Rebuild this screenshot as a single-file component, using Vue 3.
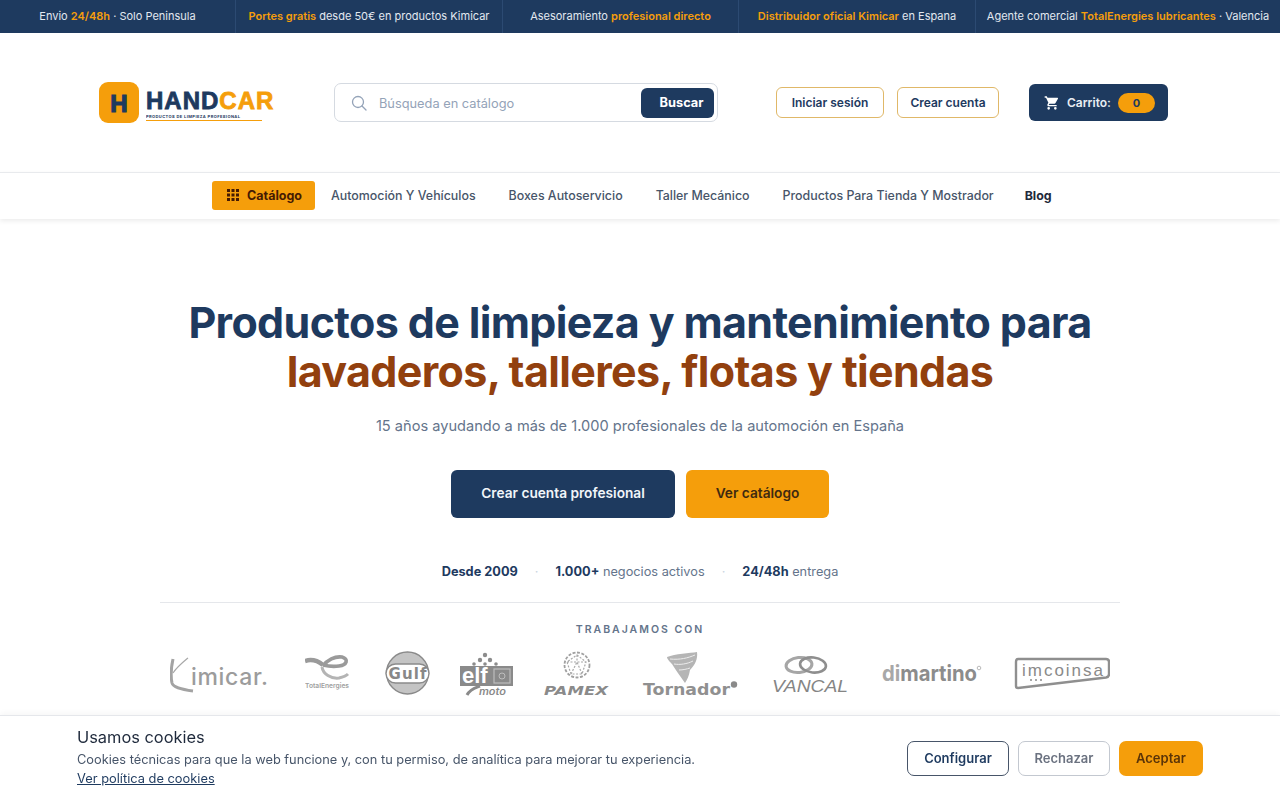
<script setup>
const topItems = [
  [{ t: 'Envio ' }, { t: '24/48h', b: 1 }, { t: ' · Solo Peninsula' }],
  [{ t: 'Portes gratis', b: 1 }, { t: ' desde 50€ en productos Kimicar' }],
  [{ t: 'Asesoramiento ' }, { t: 'profesional directo', b: 1 }],
  [{ t: 'Distribuidor oficial Kimicar', b: 1 }, { t: ' en Espana' }],
  [{ t: 'Agente comercial ' }, { t: 'TotalEnergies lubricantes', b: 1 }, { t: ' · Valencia' }],
]
const navLinks = ['Automoción Y Vehículos', 'Boxes Autoservicio', 'Taller Mecánico', 'Productos Para Tienda Y Mostrador']
</script>

<template>
  <div class="page">
    <div class="topbar">
      <div v-for="(item, i) in topItems" :key="i" class="top-item">
        <span v-for="(part, j) in item" :key="j" :class="{ hl: part.b }">{{ part.t }}</span>
      </div>
    </div>

    <header class="header">
      <div class="logo">
        <div class="logo-mark">H</div>
        <div class="logo-text">
          <div class="logo-name">HAND<span>CAR</span></div>
          <div class="logo-tag">PRODUCTOS DE LIMPIEZA PROFESIONAL</div>
        </div>
      </div>
      <div class="search">
        <svg class="search-icon" width="16" height="16" viewBox="0 0 16 16" fill="none" stroke="#94a3b8" stroke-width="1.3">
          <circle cx="7" cy="7" r="5.5" />
          <path d="M11 11l4 4" stroke-linecap="round" />
        </svg>
        <span class="search-ph">Búsqueda en catálogo</span>
        <button class="search-btn">Buscar</button>
      </div>
      <div class="auth">
        <button class="outline-btn login">Iniciar sesión</button>
        <button class="outline-btn signup">Crear cuenta</button>
      </div>
      <button class="cart">
        <svg width="16" height="16" viewBox="0 0 24 24" fill="#fff">
          <path d="M7 18a2 2 0 1 0 0 4 2 2 0 0 0 0-4zM1 2v2h2l3.6 7.59-1.35 2.45A2 2 0 0 0 7 17h12v-2H7.42a.25.25 0 0 1-.25-.25l.03-.12.9-1.63h7.45c.75 0 1.41-.41 1.75-1.03l3.58-6.49A1 1 0 0 0 20 4H5.21l-.94-2H1zm16 16a2 2 0 1 0 0 4 2 2 0 0 0 0-4z" />
        </svg>
        <span>Carrito:</span>
        <span class="cart-count">0</span>
      </button>
    </header>

    <nav class="nav">
      <button class="cat-btn">
        <svg width="12" height="12" viewBox="0 0 12 12" fill="#451a03">
          <rect x="0" y="0" width="3" height="3" /><rect x="4.5" y="0" width="3" height="3" /><rect x="9" y="0" width="3" height="3" />
          <rect x="0" y="4.5" width="3" height="3" /><rect x="4.5" y="4.5" width="3" height="3" /><rect x="9" y="4.5" width="3" height="3" />
          <rect x="0" y="9" width="3" height="3" /><rect x="4.5" y="9" width="3" height="3" /><rect x="9" y="9" width="3" height="3" />
        </svg>
        Catálogo
      </button>
      <a v-for="link in navLinks" :key="link" class="nav-link">{{ link }}</a>
      <a class="nav-link blog">Blog</a>
    </nav>

    <main class="hero">
      <h1>Productos de limpieza y mantenimiento para<br /><span>lavaderos, talleres, flotas y tiendas</span></h1>
      <p class="sub">15 años ayudando a más de 1.000 profesionales de la automoción en España</p>
      <div class="cta">
        <button class="cta-primary">Crear cuenta profesional</button>
        <button class="cta-secondary">Ver catálogo</button>
      </div>
      <div class="stats">
        <span><b>Desde 2009</b></span>
        <i>·</i>
        <span><b>1.000+</b> negocios activos</span>
        <i>·</i>
        <span><b>24/48h</b> entrega</span>
      </div>
      <section class="brands">
        <div class="brands-title">TRABAJAMOS CON</div>
        <div class="brand-row">
          <!-- kimicar -->
          <svg width="105" height="50" viewBox="0 0 105 50">
            <path d="M3 9 C1 18 1 28 2 33 C3 37 10 39 23 41" fill="none" stroke="#a3a3a3" stroke-width="3" />
            <path d="M18 8 C12 13 7 17 3 23" fill="none" stroke="#a8a8a8" stroke-width="1.2" />
            <text x="21" y="35" textLength="77" lengthAdjust="spacing" class="l-kimicar">imicar.</text>
          </svg>
          <!-- totalenergies -->
          <svg width="50" height="50" viewBox="0 0 50 50">
            <path d="M0 11 C6 9 13 11 18 15" fill="none" stroke="#9a9a9a" stroke-width="4.5" />
            <path d="M18 16 C22 10 30 6 37 7 C44 9 42 15 34 16 C28 17 22 16 18 15" fill="none" stroke="#9a9a9a" stroke-width="3.6" />
            <path d="M17 17 C18 24 26 29 34 28 C38 27 41 26 43 24" fill="none" stroke="#b4b4b4" stroke-width="3" />
            <text x="0" y="38" textLength="44" lengthAdjust="spacingAndGlyphs" class="l-total">TotalEnergies</text>
          </svg>
          <!-- gulf -->
          <svg width="45" height="50" viewBox="0 0 45 50">
            <circle cx="22.500" cy="23" r="21" fill="#c4c4c4" stroke="#8a8a8a" stroke-width="1.4" />
            <rect x="1" y="14" width="43" height="19" rx="9.500" fill="#fff" stroke="#8a8a8a" stroke-width="1.4" />
            <text x="22.500" y="29" text-anchor="middle" textLength="38" lengthAdjust="spacing" class="l-gulf">Gulf</text>
          </svg>
          <!-- elf moto -->
          <svg width="54" height="50" viewBox="0 0 54 50">
            <g fill="#8c8c8c">
              <circle cx="25" cy="5" r="2.200" /><circle cx="20" cy="10" r="2.200" /><circle cx="30" cy="10" r="2.200" />
              <circle cx="14" cy="14" r="1.800" /><circle cx="25" cy="14" r="1.800" /><circle cx="36" cy="14" r="1.800" />
            </g>
            <rect x="0" y="16" width="53" height="20" fill="#8a8a8a" />
            <rect x="34" y="19" width="16" height="14" fill="none" stroke="#bdbdbd" stroke-width="1.2" />
            <circle cx="42" cy="26" r="3" fill="none" stroke="#bdbdbd" />
            <text x="2" y="33" class="l-elf">elf</text>
            <text x="19" y="45" textLength="27" lengthAdjust="spacingAndGlyphs" class="l-moto">moto</text>
            <path d="M7 45 C10 39 15 38 20 36" stroke="#8a8a8a" stroke-width="3" fill="none" />
          </svg>
          <!-- pamex -->
          <svg width="68" height="50" viewBox="0 0 68 50">
            <circle cx="33" cy="15" r="12.500" fill="none" stroke="#a0a0a0" stroke-width="1.800" stroke-dasharray="3 1.500" />
            <path d="M33 5 L42 12 L38 24 L27 24 L23 12 Z M33 5 L33 12 M23 12 L33 12 L42 12 M27 24 L33 12 L38 24" fill="none" stroke="#a8a8a8" stroke-width="1.200" stroke-dasharray="2 1.500" />
            <text x="0" y="45" textLength="64" lengthAdjust="spacingAndGlyphs" class="l-pamex">PAMEX</text>
          </svg>
          <!-- tornador -->
          <svg width="98" height="50" viewBox="0 0 98 50">
            <path d="M25 7 C33 4 48 3 55 2 C56 9 53 15 48 20 C47 26 45 30 43 33 C39 27 33 19 30 14 C28 12 25 9 25 7 Z" fill="#b5b5b5" />
            <path d="M28 9 C38 10 46 8 53 5 M32 14 C38 15 45 14 51 11 M37 20 C41 20 45 19 48 18" stroke="#ececec" stroke-width="1" fill="none" />
            <text x="1" y="45" textLength="87" lengthAdjust="spacingAndGlyphs" class="l-tornador">Tornador</text>
            <circle cx="92" cy="34.500" r="3.200" fill="#8a8a8a" />
          </svg>
          <!-- vancal -->
          <svg width="82" height="50" viewBox="0 0 82 50">
            <ellipse cx="29" cy="15" rx="13" ry="7.500" fill="none" stroke="#a6a6a6" stroke-width="3" transform="rotate(-6 29 15)" />
            <ellipse cx="43" cy="15" rx="13" ry="7.500" fill="none" stroke="#8e8e8e" stroke-width="2.600" transform="rotate(6 43 15)" />
            <text x="2" y="42" textLength="76" lengthAdjust="spacingAndGlyphs" class="l-vancal">VANCAL</text>
          </svg>
          <!-- dimartino -->
          <svg width="102" height="50" viewBox="0 0 102 50">
            <text x="0" y="31" textLength="95" lengthAdjust="spacingAndGlyphs" class="l-dim">di<tspan class="l-dim-m">martino</tspan></text>
            <circle cx="97" cy="18" r="1.800" fill="none" stroke="#a8a8a8" stroke-width="0.800" />
          </svg>
          <!-- imcoinsa -->
          <svg width="96" height="50" viewBox="0 0 96 50">
            <path d="M4 9 Q2 9 2 12 V36 Q2 38 4 38 L92 27.500 Q95 27 95 24 V12 Q95 9 92 9 Z" fill="none" stroke="#8f8f8f" stroke-width="2.400" />
            <text x="8" y="26" textLength="81" lengthAdjust="spacing" class="l-imco">imcoinsa</text>
            <circle cx="17" cy="30" r="1" fill="#8a8a8a" /><circle cx="22" cy="30" r="1" fill="#8a8a8a" /><circle cx="27" cy="30" r="1" fill="#8a8a8a" />
          </svg>
        </div>
      </section>
    </main>

    <div class="cookies">
      <div class="cookie-text">
        <div class="cookie-title">Usamos cookies</div>
        <div class="cookie-desc">Cookies técnicas para que la web funcione y, con tu permiso, de analítica para mejorar tu experiencia.</div>
        <a class="cookie-link">Ver política de cookies</a>
      </div>
      <div class="cookie-actions">
        <button class="ck ck-config">Configurar</button>
        <button class="ck ck-reject">Rechazar</button>
        <button class="ck ck-accept">Aceptar</button>
      </div>
    </div>
  </div>
</template>

<style>
html, body { margin: 0; background: #fff; }
</style>

<style scoped>
.page {
  font-family: Inter, "Liberation Sans", sans-serif;
  color: #1e3a5f;
  height: 800px;
  overflow: hidden;
}
button { font-family: inherit; cursor: pointer; }

.topbar {
  display: grid;
  grid-template-columns: 236px 267px 236px 237px 304px;
  height: 33px;
  background: #1e3a5f;
  color: #e2e8f0;
  font-size: 11px;
}
.top-item {
  display: flex;
  align-items: center;
  justify-content: center;
  padding-bottom: 1px;
  white-space: pre;
  border-right: 1px solid #2c4a72;
}
.top-item:last-child { border-right: 0; }
.hl { color: #f59e0b; font-weight: 600; }

.header {
  display: flex;
  align-items: center;
  height: 139px;
  padding-left: 99px;
}
.logo { display: flex; align-items: center; width: 235px; }
.logo-mark {
  width: 40px;
  height: 41px;
  border-radius: 9px;
  background: #f59e0b;
  color: #1e3a5f;
  font: 700 24px/43px "Liberation Sans", sans-serif;
  text-align: center;
  -webkit-text-stroke: 1.2px #1e3a5f;
}
.logo-text { margin-left: 7px; padding-top: 4px; }
.logo-name {
  font: 700 24px/26px "Liberation Sans", sans-serif;
  letter-spacing: 1px;
  color: #1e3a5f;
  -webkit-text-stroke: 0.8px currentColor;
}
.logo-name span { color: #f59e0b; }
.logo-tag {
  font-size: 4px;
  line-height: 5px;
  font-weight: 700;
  letter-spacing: 0.42px;
  white-space: nowrap;
  width: 116px;
  overflow: hidden;
  border-bottom: 1px solid #f59e0b;
  padding-bottom: 1px;
}

.search {
  box-sizing: border-box;
  display: flex;
  align-items: center;
  width: 384px;
  height: 39px;
  border: 1px solid #d5dae1;
  border-radius: 7px;
  padding: 0 3px 0 16px;
}
.search-ph { margin-left: 12px; padding-top: 1px; flex: 1; color: #94a3b8; font-size: 12.8px; }
.search-btn {
  width: 73px;
  height: 30px;
  border: 0;
  border-radius: 6px;
  background: #1e3a5f;
  color: #fff;
  font-size: 12.8px;
  font-weight: 700;
  padding-left: 14px;
}

.auth { display: flex; gap: 13px; margin-left: 58px; }
.outline-btn {
  height: 31px;
  background: #fff;
  border: 1px solid #e0b868;
  border-radius: 6px;
  color: #1e3a5f;
  font-size: 12px;
  font-weight: 600;
  padding: 0;
}
.login { width: 108px; }
.signup { width: 102px; }

.cart {
  display: flex;
  align-items: center;
  width: 139px;
  height: 37px;
  margin-left: 30px;
  padding: 0 13px 0 15px;
  border: 0;
  border-radius: 6px;
  background: #1e3a5f;
  color: #e8edf3;
  font-size: 12px;
  font-weight: 600;
}
.cart svg { margin-right: 7px; }
.cart-count {
  margin-left: 7px;
  width: 37px;
  height: 20px;
  line-height: 20px;
  border-radius: 10px;
  background: #f59e0b;
  color: #1e3a5f;
  font-size: 11px;
  font-weight: 700;
}

.nav {
  box-sizing: border-box;
  height: 47px;
  display: flex;
  align-items: center;
  gap: 33px;
  padding: 0 0 2px 212px;
  border-top: 1px solid #e8eaed;
  box-shadow: 0 2px 5px rgba(0, 0, 0, 0.08);
  font-size: 12.4px;
  color: #475569;
  font-weight: 500;
}
.cat-btn {
  display: flex;
  align-items: center;
  gap: 8px;
  width: 103px;
  height: 29px;
  margin-right: -17px;
  padding: 0 0 0 15px;
  border: 0;
  border-radius: 3px;
  background: #f59e0b;
  color: #451a03;
  font-size: 12.5px;
  font-weight: 700;
}
.blog { color: #1e293b; font-weight: 700; margin-left: -2px; }

.hero {
  display: flex;
  flex-direction: column;
  align-items: center;
  padding-top: 79px;
}
h1 {
  margin: 0;
  font-size: 43px;
  line-height: 49px;
  font-weight: 700;
  letter-spacing: -0.65px;
  text-align: center;
  color: #1e3a5f;
}
h1 span { color: #92400e; }
.sub {
  margin: 18px 0 0;
  font-size: 14.6px;
  line-height: 24px;
  color: #64748b;
}
.cta { display: flex; gap: 11px; margin-top: 32px; }
.cta button {
  height: 48px;
  border: 0;
  border-radius: 6px;
  font-size: 13.7px;
  font-weight: 600;
  padding: 0 0 2px;
}
.cta-primary { width: 224px; background: #1e3a5f; color: #f1f5f9; }
.cta-secondary { width: 143px; background: #f59e0b; color: #3f2a10; }
.stats {
  display: flex;
  align-items: center;
  gap: 17px;
  margin-top: 45px;
  font-size: 12.75px;
  line-height: 18px;
  color: #64748b;
}
.stats b { color: #1e3a5f; font-weight: 700; }
.stats i { color: #cbd5e1; font-style: normal; }

.brands {
  width: 960px;
  margin-top: 21px;
  border-top: 1px solid #e5e7eb;
  padding-top: 20px;
}
.brands-title {
  text-align: center;
  font-size: 10.5px;
  line-height: 13px;
  font-weight: 600;
  letter-spacing: 2px;
  color: #64748b;
}
.brand-row {
  display: flex;
  justify-content: center;
  gap: 30px;
  margin-top: 14px;
}
.l-kimicar { font: 500 23px Inter, sans-serif; fill: #9c9c9c; }
.l-total { font: 600 6.500px Inter, sans-serif; fill: #a0a0a0; }
.l-gulf { font: 700 15px "DejaVu Sans", sans-serif; fill: #888; }
.l-elf { font: 700 22px "Liberation Sans", sans-serif; fill: #fff; }
.l-moto { font: italic 600 10px Inter, sans-serif; fill: #8a8a8a; }
.l-pamex { font: italic 700 13px "DejaVu Sans", sans-serif; fill: #8a8a8a; }
.l-tornador { font: 700 15px "DejaVu Sans", sans-serif; fill: #909090; }
.l-vancal { font: italic 400 17px "Liberation Sans", sans-serif; fill: #858585; }
.l-dim { font: 700 22px Inter, sans-serif; fill: #a8a8a8; }
.l-dim-m { fill: #8c8c8c; }
.l-imco { font: 500 17px "Liberation Sans", sans-serif; fill: #8a8a8a; }

.cookies {
  position: fixed;
  left: 0;
  right: 0;
  bottom: 0;
  box-sizing: border-box;
  height: 85px;
  display: flex;
  align-items: center;
  justify-content: space-between;
  padding: 0 77px;
  background: #fff;
  border-top: 1px solid #e5e7eb;
  box-shadow: 0 -2px 6px rgba(0, 0, 0, 0.04);
}
.cookie-title { font-size: 16.4px; line-height: 22px; color: #1e293b; font-weight: 400; }
.cookie-desc { font-size: 12.8px; line-height: 19px; color: #475569; margin-top: 2px; }
.cookie-link { display: block; font-size: 12.85px; line-height: 19px; color: #1e3a5f; text-decoration: underline; margin-bottom: 2px; }
.cookie-actions { display: flex; gap: 9px; }
.ck {
  height: 35px;
  border-radius: 7px;
  font-size: 13px;
  font-weight: 600;
  padding: 0;
  background: #fff;
}
.ck-config { width: 102px; border: 1px solid #475569; color: #1e3a5f; }
.ck-reject { width: 92px; border: 1px solid #c3c8d0; color: #6b7280; }
.ck-accept { width: 84px; border: 0; background: #f59e0b; color: #5a3408; }
</style>
